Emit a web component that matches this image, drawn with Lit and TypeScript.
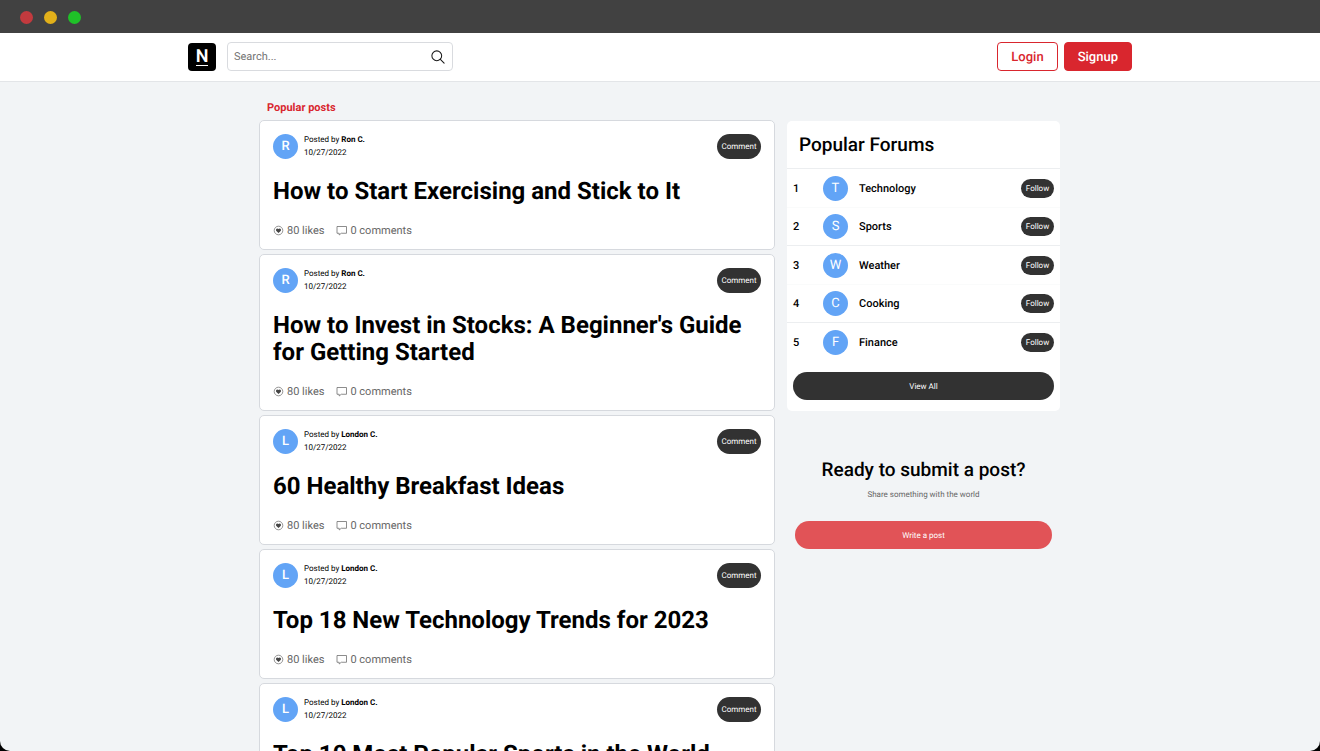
import { LitElement, html, css } from "lit";
import { customElement, property } from "lit/decorators.js";

interface Post {
  author: string;
  date: string;
  title: string;
  likes: number;
  comments: number;
}

const POSTS: Post[] = [
  { author: "Ron C.", date: "10/27/2022", title: "How to Start Exercising and Stick to It", likes: 80, comments: 0 },
  { author: "Ron C.", date: "10/27/2022", title: "How to Invest in Stocks: A Beginner's Guide for Getting Started", likes: 80, comments: 0 },
  { author: "London C.", date: "10/27/2022", title: "60 Healthy Breakfast Ideas", likes: 80, comments: 0 },
  { author: "London C.", date: "10/27/2022", title: "Top 18 New Technology Trends for 2023", likes: 80, comments: 0 },
  { author: "London C.", date: "10/27/2022", title: "Top 10 Most Popular Sports in the World", likes: 80, comments: 0 },
];

const FORUMS = ["Technology", "Sports", "Weather", "Cooking", "Finance"];

const base = css`
  *,
  *::before,
  *::after {
    box-sizing: border-box;
  }
  h1,
  h2,
  h3,
  p,
  ol {
    margin: 0;
    padding: 0;
  }
  button {
    margin: 0;
    padding: 0;
    border: 0;
    font-family: inherit;
    text-rendering: inherit;
    cursor: pointer;
  }
  .avatar {
    display: flex;
    align-items: center;
    justify-content: center;
    flex: none;
    width: 25px;
    height: 25px;
    border-radius: 50%;
    background: #62a4f6;
    color: #fff;
    font-size: 13px;
    line-height: 17px;
  }
  .pill {
    flex: none;
    border-radius: 16px;
    background: #323232;
    color: #fff;
    font-size: 8px;
    line-height: 13px;
  }
`;

@customElement("post-card")
export class PostCard extends LitElement {
  @property({ attribute: false }) post!: Post;

  static styles = [
    base,
    css`
      :host {
        display: block;
      }
      .card {
        padding: 12px 13px 11px;
        border: 1px solid #d6d9de;
        border-radius: 5px;
        background: #fff;
      }
      .head {
        display: flex;
        align-items: center;
        gap: 6px;
      }
      .avatar {
        font-weight: 500;
      }
      .by {
        flex: 1;
        font-size: 8px;
        line-height: 13px;
      }
      .comment {
        width: 44px;
        height: 25px;
      }
      .title {
        margin: 19px 0 18px;
        font-size: 24px;
        line-height: 27px;
        font-weight: 700;
      }
      .stats {
        display: flex;
        gap: 12px;
        color: #666;
        font-size: 11px;
        line-height: 15px;
      }
      .stat {
        display: flex;
        align-items: center;
        gap: 3px;
      }
      .stat svg {
        width: 11px;
        height: 11px;
      }
    `,
  ];

  render() {
    const p = this.post;
    return html`
      <article class="card">
        <div class="head">
          <span class="avatar">${p.author[0]}</span>
          <div class="by">
            <p>Posted by <b>${p.author}</b></p>
            <p>${p.date}</p>
          </div>
          <button class="pill comment" type="button">Comment</button>
        </div>
        <h2 class="title">${p.title}</h2>
        <div class="stats">
          <span class="stat">
            <svg viewBox="0 0 22 22" aria-hidden="true">
              <circle cx="11" cy="11" r="8.6" fill="none" stroke="#707070" stroke-width="1.5" />
              <path d="M11 16.2 6.7 11.9C4.2 8.8 8.6 4.9 11 8.1c2.4-3.2 6.8.7 4.3 3.8z" fill="#444" />
            </svg>
            ${p.likes} likes
          </span>
          <span class="stat">
            <svg viewBox="0 0 22 22" aria-hidden="true">
              <path d="M2 3h19v13.500H10.500L6.400 20v-3.500H2z" fill="none" stroke="#707070" stroke-width="1.6" stroke-linejoin="round" />
            </svg>
            ${p.comments} comments
          </span>
        </div>
      </article>
    `;
  }
}

@customElement("forum-panel")
export class ForumPanel extends LitElement {
  static styles = [
    base,
    css`
      :host {
        display: block;
      }
      .panel {
        padding-bottom: 11px;
        border-radius: 5px;
        background: #fff;
      }
      .heading {
        padding: 12px 12px 11px;
        font-size: 19px;
        line-height: 24px;
        font-weight: 500;
      }
      .list {
        list-style: none;
      }
      .row {
        display: flex;
        align-items: center;
        height: 38px;
        padding: 0 6px;
        font-size: 11px;
        line-height: 15px;
        font-weight: 500;
      }
      .row:nth-child(odd) {
        height: 39px;
        border-top: 1px solid #eceef0;
      }
      .row:nth-child(even) {
        box-shadow: inset 0 1px #fafbfb;
      }
      .rank {
        width: 30px;
      }
      .avatar {
        font-weight: 400;
      }
      .name {
        flex: 1;
        padding-left: 11px;
      }
      .follow {
        width: 33px;
        height: 19px;
      }
      .all {
        padding: 11px 6px 0;
      }
      .view {
        display: block;
        width: 100%;
        height: 28px;
      }
    `,
  ];

  render() {
    return html`
      <section class="panel">
        <h2 class="heading">Popular Forums</h2>
        <ol class="list">
          ${FORUMS.map(
            (name, i) => html`
              <li class="row">
                <span class="rank">${i + 1}</span>
                <span class="avatar">${name[0]}</span>
                <span class="name">${name}</span>
                <button class="pill follow" type="button">Follow</button>
              </li>
            `
          )}
        </ol>
        <div class="all"><button class="pill view" type="button">View All</button></div>
      </section>
    `;
  }
}

@customElement("app-root")
export class AppRoot extends LitElement {
  static styles = [
    base,
    css`
      :host {
        display: flex;
        flex-direction: column;
        height: 100vh;
        overflow: hidden;
        background: #000;
        color: #000;
        font-family: Roboto, "Liberation Sans", sans-serif;
        text-rendering: geometricPrecision;
      }
      .chrome {
        display: flex;
        align-items: center;
        flex: none;
        gap: 11px;
        height: 33px;
        padding: 2px 20px 0;
        background: #414141;
      }
      .dot {
        width: 13px;
        height: 13px;
        border-radius: 50%;
      }
      .red {
        background: #c23a3e;
      }
      .yellow {
        background: #e2b01a;
      }
      .green {
        background: #1fc128;
      }
      .page {
        flex: 1;
        min-height: 0;
        overflow: hidden;
        border-radius: 0 0 10px 10px;
        background: #f2f4f6;
      }
      .nav {
        padding: 9px 16px 10px;
        border-bottom: 1px solid #e3e5e8;
        background: #fff;
      }
      .bar {
        display: flex;
        align-items: center;
        max-width: 944px;
        margin: 0 auto;
      }
      .logo {
        display: flex;
        align-items: center;
        justify-content: center;
        width: 28px;
        height: 28px;
        margin-right: 11px;
        border-radius: 4px;
        background: #000;
        color: #fff;
        font-size: 18px;
        line-height: 17px;
        font-weight: 600;
        text-decoration: none;
      }
      .letter {
        border-bottom: 1px solid #fff;
      }
      .search {
        display: flex;
        align-items: center;
        width: 226px;
        height: 29px;
        padding: 0 7px 0 6px;
        border: 1px solid #d9dbdf;
        border-radius: 4px;
        background: #fff;
      }
      .field {
        flex: 1;
        min-width: 0;
        padding: 0;
        border: 0;
        outline: 0;
        background: none;
        font: 11px/15px Roboto, "Liberation Sans", sans-serif;
        text-rendering: inherit;
      }
      .field::placeholder {
        color: #757575;
        opacity: 1;
      }
      .find {
        display: flex;
        background: none;
      }
      .find svg {
        width: 14px;
        height: 14px;
      }
      .auth {
        display: flex;
        gap: 6px;
        margin-left: auto;
      }
      .btn {
        height: 29px;
        padding: 1px 13px 0;
        border: 1px solid #d9262e;
        border-radius: 4px;
        background: #fff;
        color: #d9262e;
        font-size: 13px;
        line-height: 17px;
        font-weight: 500;
      }
      .solid {
        background: #d9262e;
        color: #fff;
      }
      .content {
        display: grid;
        grid-template-columns: minmax(0, 516fr) minmax(0, 273fr);
        column-gap: 12px;
        align-items: start;
        max-width: 802px;
        margin: 0 auto;
        padding: 18px 1px 0 0;
      }
      .label {
        grid-column: 1 / -1;
        padding: 0 8px 5px;
        color: #d9262e;
        font-size: 11px;
        line-height: 15px;
        font-weight: 700;
      }
      .posts {
        display: grid;
        gap: 4px;
      }
      .side {
        padding-top: 1px;
      }
      .cta {
        padding: 47px 8px 0;
        text-align: center;
      }
      .ready {
        font-size: 19px;
        line-height: 24px;
        font-weight: 500;
      }
      .note {
        margin: 7px 0 20px;
        color: #666;
        font-size: 8px;
        line-height: 12px;
      }
      .write {
        width: 100%;
        height: 28px;
        background: #e15357;
      }
    `,
  ];

  render() {
    return html`
      <div class="chrome">
        <span class="dot red"></span>
        <span class="dot yellow"></span>
        <span class="dot green"></span>
      </div>
      <div class="page">
        <header class="nav">
          <div class="bar">
            <a class="logo" href="#" aria-label="Home"><span class="letter">N</span></a>
            <form class="search" role="search">
              <input class="field" type="text" placeholder="Search..." aria-label="Search" />
              <button class="find" type="button" aria-label="Search">
                <svg viewBox="0 0 16 16" fill="none" stroke="#1a1a1a" stroke-width="1.2" stroke-linecap="round">
                  <circle cx="6.6" cy="6.6" r="5.6" />
                  <path d="M10.7 10.7 15 15" />
                </svg>
              </button>
            </form>
            <div class="auth">
              <button class="btn" type="button">Login</button>
              <button class="btn solid" type="button">Signup</button>
            </div>
          </div>
        </header>
        <main class="content">
          <h1 class="label">Popular posts</h1>
          <div class="posts">${POSTS.map((post) => html`<post-card .post=${post}></post-card>`)}</div>
          <aside class="side">
            <forum-panel></forum-panel>
            <section class="cta">
              <h2 class="ready">Ready to submit a post?</h2>
              <p class="note">Share something with the world</p>
              <button class="pill write" type="button">Write a post</button>
            </section>
          </aside>
        </main>
      </div>
    `;
  }
}
